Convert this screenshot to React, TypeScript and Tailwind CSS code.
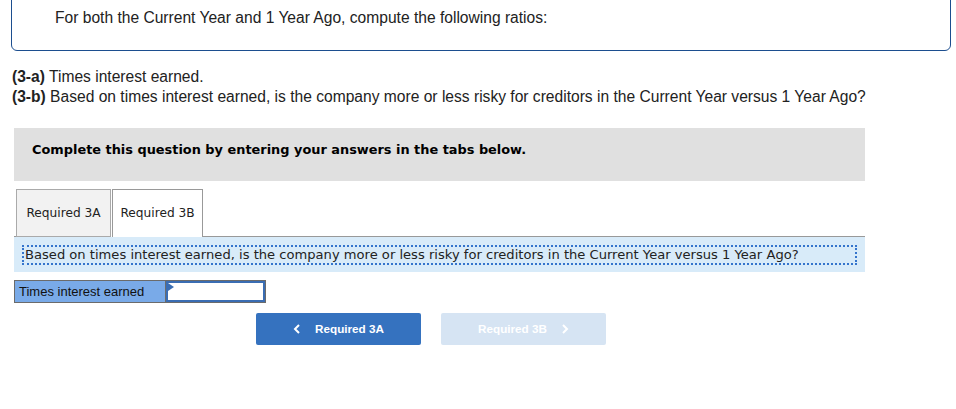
import React from 'react';

export default function App() {
  return (
    <div className="w-[956px] h-[409px] overflow-hidden bg-white text-[#222]">
      {/* Prompt box (top edge scrolled off) */}
      <div className="ml-[11px] -mt-[8px] w-[940px] h-[59px] border border-[#1c4e8f] rounded-md pl-[43px] pt-[15px]">
        <p className="text-[15.6px] leading-[20px] font-['Liberation_Sans',Arial,sans-serif]">
          For both the Current Year and 1 Year Ago, compute the following ratios:
        </p>
      </div>

      <div className="ml-[12px] mt-[16px] text-[15.6px] leading-[20px] font-['Liberation_Sans',Arial,sans-serif]">
        <p>
          <span className="font-bold">(3-a)</span> Times interest earned.
        </p>
        <p>
          <span className="font-bold">(3-b)</span> Based on times interest earned, is the company more or less risky for creditors in the Current Year versus 1 Year Ago?
        </p>
      </div>

      <div className="ml-[14px] w-[851px]">
        {/* Instruction bar */}
        <div className="mt-[21px] h-[53px] bg-[#e0e0e0] pl-[18px] pt-[14px]">
          <p className="text-[12.9px] leading-[16px] font-bold text-black font-['DejaVu_Sans',Verdana,sans-serif]">
            Complete this question by entering your answers in the tabs below.
          </p>
        </div>

        {/* Tabs */}
        <div className="mt-[8px] flex items-end h-[48px] font-['DejaVu_Sans',Verdana,sans-serif] text-[12.2px]">
          <div className="w-[2px] h-full border-b border-[#999]" />
          <button className="w-[95px] h-full bg-[#f2f2f2] border border-[#aaa] text-[#222]">Required 3A</button>
          <button className="w-[91px] h-full bg-white border border-[#999] border-b-0 ml-px text-[#222]">Required 3B</button>
          <div className="flex-1 h-full border-b border-[#999]" />
        </div>

        {/* Question panel */}
        <div className="h-[35px] bg-[#d8ebf9] pt-[8px] pl-[8px] pr-[8px]">
          <div className="h-[20px] border-2 border-dotted border-[#3474cc] flex items-center pl-px">
            <p className="text-[13.1px] leading-[16px] text-[#222] font-['DejaVu_Sans',Verdana,sans-serif]">
              Based on times interest earned, is the company more or less risky for creditors in the Current Year versus 1 Year Ago?
            </p>
          </div>
        </div>

        {/* Answer row */}
        <div className="mt-[8px] flex h-[23px]">
          <div className="w-[152px] h-full bg-[#79aae8] border border-[#6b6b6b] flex items-center pl-[4px]">
            <span className="text-[13px] text-[#111] font-['Liberation_Sans',Arial,sans-serif]">Times interest earned</span>
          </div>
          <div className="relative w-[100px] h-full border border-[#6b6b6b] border-l-0">
            <div className="absolute inset-0 border-2 border-[#3a6db3]" />
            <div className="absolute left-[2px] top-[2px] w-0 h-0 border-t-[4px] border-b-[4px] border-l-[6px] border-t-transparent border-b-transparent border-l-[#3a6db3]" />
          </div>
        </div>

        {/* Nav buttons */}
        <div className="mt-[10px] ml-[242px] flex gap-[20px] font-['Liberation_Sans',Arial,sans-serif]">
          <button className="w-[165px] h-[32px] rounded-[2px] bg-[#3572bf] text-white text-[11.7px] font-bold flex items-center justify-center">
            <svg width="8" height="10" viewBox="0 0 8 10" className="mr-[14px]">
              <path d="M6 1 L2 5 L6 9" fill="none" stroke="white" strokeWidth="2" />
            </svg>
            Required 3A
          </button>
          <button className="w-[165px] h-[32px] rounded-[2px] bg-[#d6e4f3] text-white text-[11.7px] font-bold flex items-center justify-center">
            Required 3B
            <svg width="8" height="10" viewBox="0 0 8 10" className="ml-[14px]">
              <path d="M2 1 L6 5 L2 9" fill="none" stroke="white" strokeWidth="2" />
            </svg>
          </button>
        </div>
      </div>
    </div>
  );
}
